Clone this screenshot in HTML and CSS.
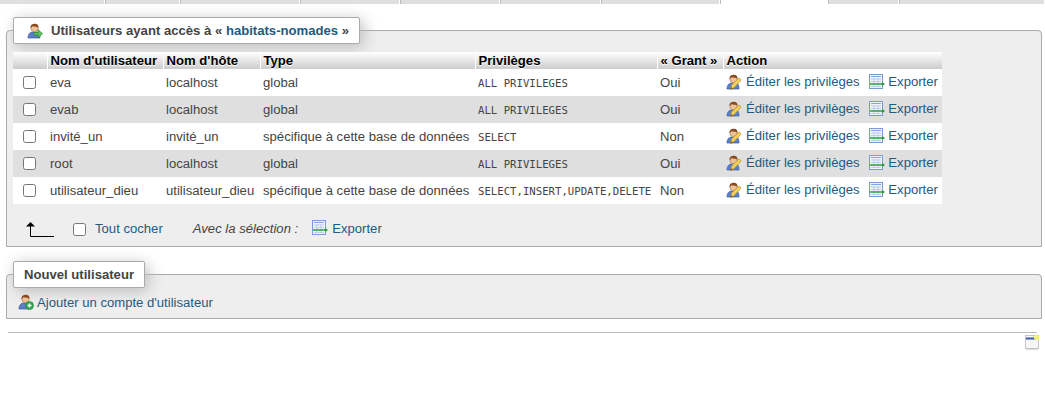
FILE: index.html
```html
<!DOCTYPE html>
<html lang="fr">
<head>
    <meta charset="UTF-8">
    <title>Utilisateurs</title>
    <link rel="stylesheet" href="styles.css">
</head>
<body>
    <svg class="defs" width="0" height="0">
        <symbol id="person" viewBox="0 0 16 16">
            <path d="M1 15c0-4 2-6 5-6h3c3 0 4 2 4 6z" fill="#5b7fc7" stroke="#3b5aa0" stroke-width=".7"/>
            <circle cx="7.500" cy="5" r="3.700" fill="#eec39a" stroke="#a8703f" stroke-width=".6"/>
            <path d="M3.600 5C3.400 1.500 6 .8 8 .8c2.500 0 3.800 1.700 3.500 4C10 3.500 7 4 5.500 3.300 5 4 4.300 4.800 3.600 5z" fill="#8a4b20"/>
        </symbol>
        <symbol id="ico-user-arrow" viewBox="0 0 16 16">
            <use href="#person"/>
            <path d="M7 9.500h4V6.500l4.500 4.200L11 15v-3H7z" fill="#5cc05c" stroke="#2a8d2a" stroke-width=".7"/>
        </symbol>
        <symbol id="ico-user-edit" viewBox="0 0 16 16">
            <use href="#person"/>
            <path d="M4.500 15.500l1-4.500 7-6.500c1-.8 2.800.9 2 2.200l-6.500 7z" fill="#f2d25a" stroke="#b08a24" stroke-width=".7"/>
            <path d="M4.500 15.500l.6-2.600 2 1.600z" fill="#8a5a2a"/>
        </symbol>
        <symbol id="ico-user-add" viewBox="0 0 16 16">
            <use href="#person"/>
            <circle cx="11.500" cy="11.500" r="4" fill="#2fa84f" stroke="#1c7a36" stroke-width=".5"/>
            <path d="M9.500 11.500h4M11.500 9.500v4" stroke="#fff" stroke-width="1.300"/>
        </symbol>
        <symbol id="ico-export" viewBox="0 0 16 16">
            <rect x=".5" y=".5" width="13" height="14" fill="#eef2fb" stroke="#7c9ad4"/>
            <path d="M2 2.500h10" stroke="#8aa4d8"/>
            <path d="M2 5h10M2 7.500h10M2 12.500h10M5 4v9M9 4v9" stroke="#b6c5e4" stroke-width=".8"/>
            <path d="M1 10h12.500" stroke="#1f9a35" stroke-width="1.400"/>
            <path d="M13 8l3 2-3 2z" fill="#1f9a35"/>
        </symbol>
    </svg>

    <nav class="tabs">
        <span class="tab"></span>
        <span class="tab"></span>
        <span class="tab"></span>
        <span class="tab"></span>
        <span class="tab"></span>
        <span class="tab"></span>
        <span class="tab"></span>
        <span class="tab active"></span>
        <span class="tab"></span>
        <span class="tab"></span>
    </nav>

    <fieldset class="panel">
        <legend>
            <svg class="icon legend-icon"><use href="#ico-user-arrow"/></svg>
            <span>Utilisateurs ayant accès à « <a href="#">habitats-nomades</a> »</span>
        </legend>
        <table class="users">
            <colgroup>
                <col class="c-check"><col class="c-user"><col class="c-host"><col class="c-type">
                <col class="c-priv"><col class="c-grant"><col class="c-action">
            </colgroup>
            <thead>
                <tr>
                    <th></th>
                    <th>Nom d'utilisateur</th>
                    <th>Nom d'hôte</th>
                    <th>Type</th>
                    <th>Privilèges</th>
                    <th>« Grant »</th>
                    <th>Action</th>
                </tr>
            </thead>
            <tbody>
                <tr>
                    <td class="check"><input type="checkbox"></td>
                    <td>eva</td>
                    <td>localhost</td>
                    <td>global</td>
                    <td><code>ALL PRIVILEGES</code></td>
                    <td>Oui</td>
                    <td class="actions">
                        <a href="#"><svg class="icon"><use href="#ico-user-edit"/></svg>Éditer les privilèges</a>
                        <a href="#" class="act-export"><svg class="icon"><use href="#ico-export"/></svg>Exporter</a>
                    </td>
                </tr>
                <tr>
                    <td class="check"><input type="checkbox"></td>
                    <td>evab</td>
                    <td>localhost</td>
                    <td>global</td>
                    <td><code>ALL PRIVILEGES</code></td>
                    <td>Oui</td>
                    <td class="actions">
                        <a href="#"><svg class="icon"><use href="#ico-user-edit"/></svg>Éditer les privilèges</a>
                        <a href="#" class="act-export"><svg class="icon"><use href="#ico-export"/></svg>Exporter</a>
                    </td>
                </tr>
                <tr>
                    <td class="check"><input type="checkbox"></td>
                    <td>invité_un</td>
                    <td>invité_un</td>
                    <td>spécifique à cette base de données</td>
                    <td><code>SELECT</code></td>
                    <td>Non</td>
                    <td class="actions">
                        <a href="#"><svg class="icon"><use href="#ico-user-edit"/></svg>Éditer les privilèges</a>
                        <a href="#" class="act-export"><svg class="icon"><use href="#ico-export"/></svg>Exporter</a>
                    </td>
                </tr>
                <tr>
                    <td class="check"><input type="checkbox"></td>
                    <td>root</td>
                    <td>localhost</td>
                    <td>global</td>
                    <td><code>ALL PRIVILEGES</code></td>
                    <td>Oui</td>
                    <td class="actions">
                        <a href="#"><svg class="icon"><use href="#ico-user-edit"/></svg>Éditer les privilèges</a>
                        <a href="#" class="act-export"><svg class="icon"><use href="#ico-export"/></svg>Exporter</a>
                    </td>
                </tr>
                <tr>
                    <td class="check"><input type="checkbox"></td>
                    <td>utilisateur_dieu</td>
                    <td>utilisateur_dieu</td>
                    <td>spécifique à cette base de données</td>
                    <td><code>SELECT,INSERT,UPDATE,DELETE</code></td>
                    <td>Non</td>
                    <td class="actions">
                        <a href="#"><svg class="icon"><use href="#ico-user-edit"/></svg>Éditer les privilèges</a>
                        <a href="#" class="act-export"><svg class="icon"><use href="#ico-export"/></svg>Exporter</a>
                    </td>
                </tr>
            </tbody>
        </table>
        <div class="with-selected">
            <svg class="arrow" width="28" height="15" viewBox="0 0 28 15">
                <path d="M4.500 3v11.500H28" fill="none" stroke="#000"/>
                <path d="M4.500 0L9 4.500H0z" fill="#000"/>
            </svg>
            <input type="checkbox" class="check-all">
            <a href="#" class="all-link">Tout cocher</a>
            <em>Avec la sélection :</em>
            <a href="#" class="export-link"><svg class="icon"><use href="#ico-export"/></svg>Exporter</a>
        </div>
    </fieldset>

    <fieldset class="panel panel-new">
        <legend>Nouvel utilisateur</legend>
        <a href="#" class="add-link"><svg class="icon"><use href="#ico-user-add"/></svg>Ajouter un compte d'utilisateur</a>
    </fieldset>

    <hr class="rule">
    <div class="foot">
        <svg class="console" width="14" height="15" viewBox="0 0 14 15">
            <rect x=".5" y=".5" width="13" height="13" fill="#f6f6f6" stroke="#c4c4c4"/>
            <rect x="1" y="2.500" width="10" height="2" fill="#3f57a8"/>
            <circle cx="11.500" cy="2.500" r="2.500" fill="#f8f46a"/>
            <path d="M1 14.500h12" stroke="#ddd"/>
        </svg>
    </div>
</body>
</html>
```

FILE: styles.css
```css
* {
    box-sizing: border-box;
}
body {
    margin: 0;
    font-family: "Liberation Sans", Arial, sans-serif;
    font-size: 13.12px;
    color: #444;
    background: #fff;
}
a {
    color: #235a81;
    text-decoration: none;
}
.defs {
    position: absolute;
}
.icon {
    width: 16px;
    height: 16px;
    flex: none;
}

.tabs {
    display: grid;
    grid-template-columns: 105px 75px 120px 100px 100px 101px 119px 108px 71px 1fr;
    height: 4px;
}
.tab {
    background: #dfdfdf;
    border-right: 1px solid #fff;
    border-left: 1px solid #bbb;
}
.tab:first-child {
    border-left: 0;
}
.tab.active {
    background: #fff;
}

.panel {
    margin: 13px 3px 0 6px;
    padding: 0 6px;
    background: #eee;
    border: 1px solid #aaa;
    border-radius: 4px 4px 0 0;
    height: 230px;
    min-width: 0;
}
.panel legend {
    display: flex;
    align-items: center;
    height: 27px;
    padding: 0 10px;
    background: #fff;
    border: 1px solid #aaa;
    border-radius: 2px;
    font-weight: bold;
    box-shadow: 3px 3px 15px #bbb;
    white-space: pre;
}
.panel legend a {
    font-weight: bold;
}
.legend-icon {
    margin: 0 8px 0 3px;
}

.users {
    border-collapse: collapse;
    table-layout: fixed;
    width: 929px;
    margin-top: 8px;
}
.c-check { width: 34px; }
.c-user { width: 116px; }
.c-host { width: 97px; }
.c-type { width: 215px; }
.c-priv { width: 182px; }
.c-grant { width: 66px; }
.c-action { width: 219px; }
.users th {
    height: 17px;
    padding: 0 3px;
    text-align: left;
    color: #000;
    border-left: 1px solid #fff;
    background: linear-gradient(#fff, #ccc);
    text-shadow: 0 1px 0 #fff;
    white-space: nowrap;
}
.users th:first-child {
    border-left: 0;
}
.users td {
    height: 27px;
    padding: 0 4px 0 3px;
    background: #fff;
    white-space: nowrap;
}
.users tr:nth-child(even) td {
    background: #dfdfdf;
}
.users code {
    font-family: "DejaVu Sans Mono", monospace;
    font-size: 10.67px;
}
.users .check {
    padding: 0;
}
.users input {
    display: block;
    margin: 0 0 0 10px;
}
.users .actions {
    padding: 0 0 0 3px;
}
.actions a {
    display: inline-flex;
    align-items: center;
    gap: 4px;
}
.actions .icon {
    transform: translateY(1px);
}
.actions .act-export {
    margin-left: 6px;
    gap: 3px;
}

.with-selected {
    display: flex;
    align-items: center;
    margin-top: 14px;
    height: 20px;
}
.arrow {
    margin: 2px 0 0 13px;
}
.check-all {
    margin: 2px 0 0 19px;
}
.all-link {
    margin-left: 9px;
}
.with-selected em {
    margin-left: 30px;
}
.export-link {
    display: inline-flex;
    align-items: center;
    gap: 4px;
    margin-left: 14px;
}

.panel-new {
    margin-top: 14px;
    height: 58px;
    border-radius: 4px 4px 0 0;
}
.add-link {
    display: flex;
    align-items: center;
    gap: 3px;
    margin: 6px 0 0 5px;
}

.rule {
    margin: 13px 8px 0;
    height: 1px;
    border: 0;
    background: #bbb;
}
.foot {
    display: flex;
    justify-content: flex-end;
    padding: 2px 6px 0 0;
}
```
